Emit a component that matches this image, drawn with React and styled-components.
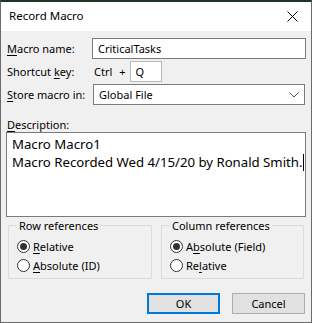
import styled, { createGlobalStyle } from 'styled-components';

const Global = createGlobalStyle`
  html, body {
    margin: 0;
    padding: 0;
    background: #f0f0f0;
  }
  body {
    font-family: "Segoe UI", "Noto Sans", "Open Sans", sans-serif;
    font-size: 11px;
    color: #000;
    white-space: nowrap;
  }
`;

// Styled components
const Window = styled.div`
  width: 312px;
  height: 323px;
  box-sizing: border-box;
  display: flex;
  flex-direction: column;
  background: #f0f0f0;
  border: 1px solid #6b6b6b;
  border-top: 2px solid #1f3526;
`;

const TitleBar = styled.div`
  display: flex;
  align-items: center;
  justify-content: space-between;
  height: 29px;
  background: #ffffff;
  padding: 0 13px 0 8px;
`;

const Title = styled.span`
  font-size: 11.5px;
  margin-top: -2px;
`;

const Body = styled.div`
  flex: 1;
  display: flex;
  flex-direction: column;
  padding: 7px 5px 0 5px;
`;

const FormRow = styled.div`
  display: flex;
  align-items: center;
  height: 21px;
  margin-bottom: 2px;
`;

const Label = styled.label`
  width: 85px;
  padding-left: 1px;
  flex-shrink: 0;
`;

const U = styled.span`
  text-decoration: underline;
  text-underline-offset: 2px;
`;

const TextBox = styled.div`
  height: 21px;
  box-sizing: border-box;
  border: 1px solid ${(p) => p.border || '#7a7a7a'};
  background: #fff;
  display: flex;
  align-items: center;
  padding-left: 5px;
  width: ${(p) => (p.width ? `${p.width}px` : 'auto')};
  flex: ${(p) => (p.width ? 'none' : 1)};
`;

const KeyText = styled.span`
  margin-left: 2px;
`;

const Plus = styled.span`
  margin: 0 4px 0 7px;
`;

const Select = styled(TextBox)`
  justify-content: space-between;
  padding-right: 5px;
  margin-left: 1px;
  margin-right: 1px;
`;

const DescLabel = styled.div`
  margin-top: 10px;
  padding-left: 1px;
  height: 15px;
  line-height: 15px;
`;

const TextArea = styled.div`
  height: 85px;
  box-sizing: border-box;
  border: 1px solid #7a7a7a;
  background: #fff;
  padding: 2px 5px;
  font-size: 13.2px;
  line-height: 18px;
`;

const Caret = styled.span`
  display: inline-block;
  width: 1px;
  height: 17px;
  background: #000;
  vertical-align: -4px;
`;

const Groups = styled.div`
  display: grid;
  grid-template-columns: 144px 143px;
  justify-content: space-between;
  margin: 1px 2px 0 2px;
`;

const Group = styled.fieldset`
  margin: 0;
  border: 1px solid #dcdcdc;
  padding: 6px 8px 8px 8px;
  min-width: 0;
  box-sizing: border-box;
  height: 61px;
  display: flex;
  flex-direction: column;
  gap: 4px;
`;

const Legend = styled.legend`
  padding: 0 2px;
  margin-left: 0;
`;

const RadioRow = styled.div`
  display: flex;
  align-items: center;
  height: 15px;
`;

const RadioCircle = styled.span`
  width: 13px;
  height: 13px;
  box-sizing: border-box;
  border-radius: 50%;
  border: 1px solid #333;
  background: #fff;
  display: flex;
  align-items: center;
  justify-content: center;
  margin-right: 3px;
  &::after {
    content: '';
    display: ${(p) => (p.checked ? 'block' : 'none')};
    width: 7px;
    height: 7px;
    border-radius: 50%;
    background: #333;
  }
`;

const Buttons = styled.div`
  display: flex;
  justify-content: flex-end;
  gap: 12px;
  margin-top: 14px;
  margin-right: 1px;
`;

const Button = styled.div`
  width: 73px;
  height: 21px;
  box-sizing: border-box;
  display: flex;
  align-items: center;
  justify-content: center;
  background: #e1e1e1;
  border: ${(p) => (p.primary ? '2px solid #0078d7' : '1px solid #adadad')};
`;

const Radio = ({ checked, children }) => (
  <RadioRow>
    <RadioCircle checked={checked} />
    <span>{children}</span>
  </RadioRow>
);

const CloseIcon = () => (
  <svg width="11" height="11" viewBox="0 0 11 11">
    <path d="M0.5 0.5 L10.5 10.5 M10.5 0.5 L0.5 10.5" stroke="#000" strokeWidth="1" />
  </svg>
);

const Chevron = () => (
  <svg width="10" height="6" viewBox="0 0 10 6">
    <path d="M0.5 0.5 L5 5 L9.5 0.5" stroke="#555" strokeWidth="1" fill="none" />
  </svg>
);

export default function App() {
  return (
    <>
      <Global />
      <Window>
        <TitleBar>
          <Title>Record Macro</Title>
          <CloseIcon />
        </TitleBar>
        <Body>
          <FormRow>
            <Label><U>M</U>acro name:</Label>
            <TextBox>CriticalTasks</TextBox>
          </FormRow>
          <FormRow>
            <Label>Shortcut <U>k</U>ey:</Label>
            <KeyText>Ctrl</KeyText>
            <Plus>+</Plus>
            <TextBox width={32} border="#b9b9b9">Q</TextBox>
          </FormRow>
          <FormRow>
            <Label><U>S</U>tore macro in:</Label>
            <Select>
              <span>Global File</span>
              <Chevron />
            </Select>
          </FormRow>
          <DescLabel><U>D</U>escription:</DescLabel>
          <TextArea>
            Macro Macro1
            <br />
            Macro Recorded Wed 4/15/20 by Ronald Smith.<Caret />
          </TextArea>
          <Groups>
            <Group>
              <Legend>Row references</Legend>
              <Radio checked><U>R</U>elative</Radio>
              <Radio><U>A</U>bsolute (ID)</Radio>
            </Group>
            <Group>
              <Legend>Column references</Legend>
              <Radio checked>A<U>b</U>solute (Field)</Radio>
              <Radio>Re<U>l</U>ative</Radio>
            </Group>
          </Groups>
          <Buttons>
            <Button primary>OK</Button>
            <Button>Cancel</Button>
          </Buttons>
        </Body>
      </Window>
    </>
  );
}
